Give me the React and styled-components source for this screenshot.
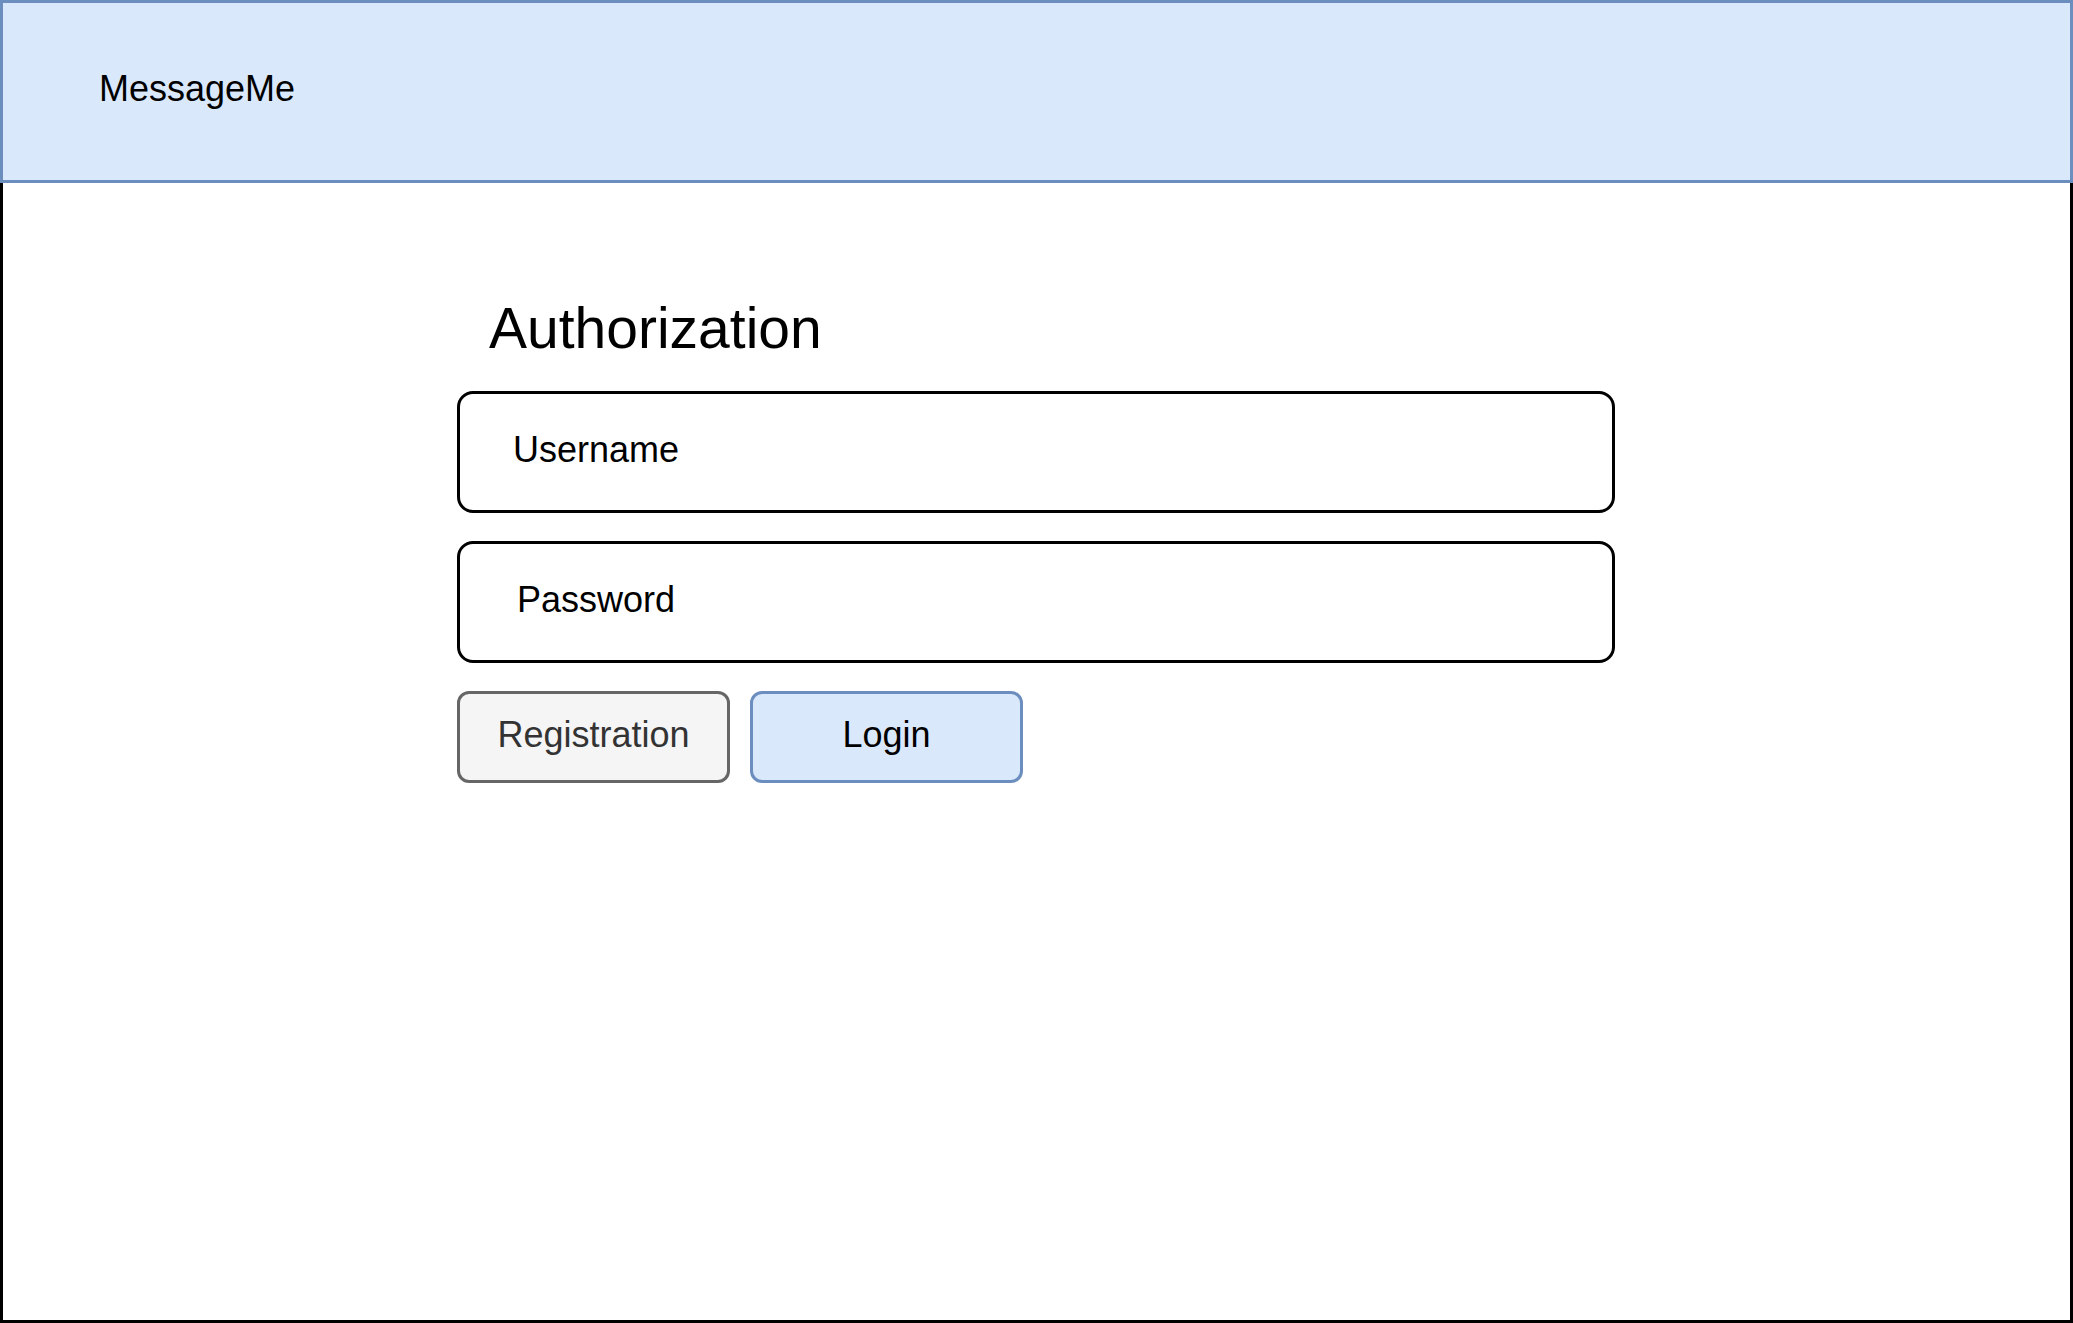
import styled, { createGlobalStyle } from "styled-components";

const GlobalStyle = createGlobalStyle`
    html, body {
        margin: 0;
        padding: 0;
        background: #ffffff;
    }
    * {
        box-sizing: border-box;
    }
`;

const Page = styled.div`
    width: 100vw;
    height: 100vh;
    display: flex;
    flex-direction: column;
    font-family: "Liberation Sans", Arial, sans-serif;
    color: #000000;
`;

const Header = styled.header`
    height: 183px;
    flex-shrink: 0;
    display: flex;
    align-items: center;
    padding: 0 0 5px 96px;
    background: #dae8fc;
    border: 3px solid #6c8ebf;
`;

const Brand = styled.div`
    font-size: 36px;
`;

const Main = styled.main`
    flex: 1;
    border: 3px solid #000000;
    border-top: none;
    padding: 113px 0 0 454px;
`;

const Form = styled.div`
    display: flex;
    flex-direction: column;
    width: 1158px;
`;

const Title = styled.h1`
    margin: 0 0 30px 32px;
    font-size: 57px;
    font-weight: normal;
    line-height: 65px;
`;

const Field = styled.div`
    height: 122px;
    display: flex;
    align-items: center;
    padding: 0 0 5px ${(p) => p.$indent}px;
    margin-bottom: 28px;
    border: 3px solid #000000;
    border-radius: 16px;
    font-size: 36px;
`;

const Actions = styled.div`
    display: flex;
    gap: 20px;
`;

const Button = styled.button`
    width: 273px;
    height: 92px;
    padding: 0 0 4px;
    border-radius: 12px;
    border: 3px solid ${(p) => (p.$primary ? "#6c8ebf" : "#666666")};
    background: ${(p) => (p.$primary ? "#dae8fc" : "#f5f5f5")};
    color: ${(p) => (p.$primary ? "#000000" : "#333333")};
    font-family: inherit;
    font-size: 36px;
    cursor: pointer;
`;

const App = () => {
    return (
        <>
            <GlobalStyle />
            <Page>
                <Header>
                    <Brand>MessageMe</Brand>
                </Header>
                <Main>
                    <Form>
                        <Title>Authorization</Title>
                        <Field $indent={53}>Username</Field>
                        <Field $indent={57}>Password</Field>
                        <Actions>
                            <Button>Registration</Button>
                            <Button $primary>Login</Button>
                        </Actions>
                    </Form>
                </Main>
            </Page>
        </>
    );
};

export default App;
